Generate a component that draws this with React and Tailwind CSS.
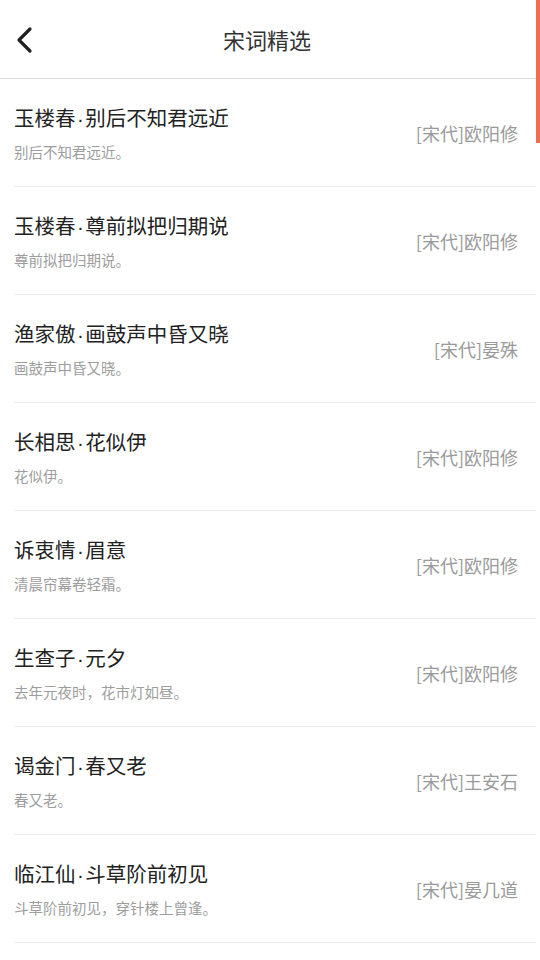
import React from 'react';

const poems = [
    { name: '玉楼春', sub: '别后不知君远近', line: '别后不知君远近。', author: '[宋代]欧阳修' },
    { name: '玉楼春', sub: '尊前拟把归期说', line: '尊前拟把归期说。', author: '[宋代]欧阳修' },
    { name: '渔家傲', sub: '画鼓声中昏又晓', line: '画鼓声中昏又晓。', author: '[宋代]晏殊' },
    { name: '长相思', sub: '花似伊', line: '花似伊。', author: '[宋代]欧阳修' },
    { name: '诉衷情', sub: '眉意', line: '清晨帘幕卷轻霜。', author: '[宋代]欧阳修' },
    { name: '生查子', sub: '元夕', line: '去年元夜时，花市灯如昼。', author: '[宋代]欧阳修' },
    { name: '谒金门', sub: '春又老', line: '春又老。', author: '[宋代]王安石' },
    { name: '临江仙', sub: '斗草阶前初见', line: '斗草阶前初见，穿针楼上曾逢。', author: '[宋代]晏几道' },
];

const font = { fontFamily: '"Noto Sans CJK SC", "Noto Sans", sans-serif' };

function PoemRow({ name, sub, line, author }) {
    return (
        <div className="ml-[14px] mr-[4px] h-[108px] border-b border-[#ececec] flex items-center justify-between">
            <div className="flex flex-col">
                <p className="text-[20.5px] leading-[28px] text-[#222]">
                    {name}
                    {/* narrow latin middle dot, the CJK one is full width */}
                    <span className="mx-[1.5px]" style={{ fontFamily: '"Liberation Sans", sans-serif' }}>·</span>
                    {sub}
                </p>
                <p className="mt-[9px] text-[14.5px] leading-[20px] text-[#9d9d9d]">{line}</p>
            </div>
            <p className="pr-[18px] text-[18px] leading-[24px] text-[#9a9a9a]">{author}</p>
        </div>
    );
}

export default function App() {
    return (
        <div className="relative w-[540px] h-[960px] bg-white overflow-hidden" style={font}>
            <div className="h-[79px] border-b border-[#dcdcdc] flex items-center justify-center relative">
                <svg className="absolute left-[14px] top-[25px]" width="22" height="30" viewBox="0 0 22 30">
                    <path d="M16 4 L5 15 L16 26" fill="none" stroke="#222" strokeWidth="3.2" strokeLinecap="round" strokeLinejoin="round" />
                </svg>
                <h1 className="text-[22px] text-[#333] font-normal pr-[6px]">宋词精选</h1>
            </div>
            <div>
                {poems.map((p) => (
                    <PoemRow key={p.name + p.sub} {...p} />
                ))}
            </div>
            <div className="absolute right-0 top-0 w-[4px] h-[143px] bg-[#f36c4f]" />
        </div>
    );
}
